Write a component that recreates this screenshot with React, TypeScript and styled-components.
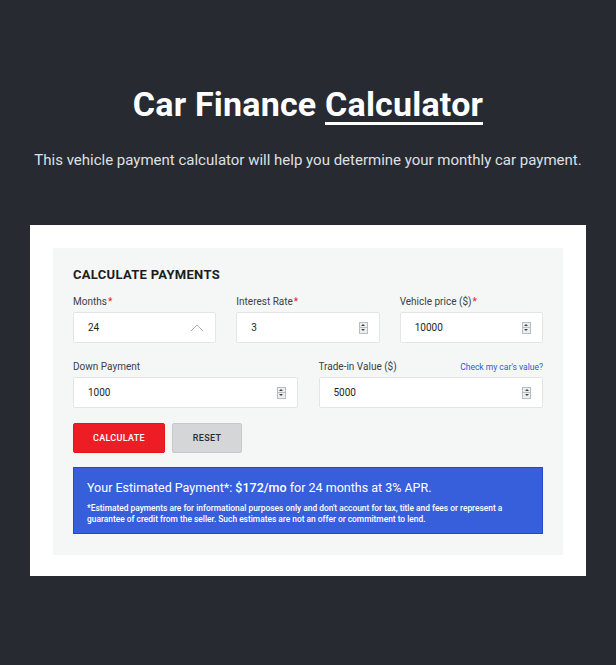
import styled, { createGlobalStyle } from "styled-components";

const GlobalStyle = createGlobalStyle`
  * { box-sizing: border-box; }
  body {
    margin: 0;
    background-color: #272a31;
    font-family: Roboto, "Noto Sans", Arial, sans-serif;
  }
`;

const Page = styled.div`
  min-height: 665px;
  padding: 84px 30px 89px;
  background-color: #272a31;
`;

const Title = styled.h1`
  margin: 0;
  text-align: center;
  color: #ffffff;
  font-family: Roboto, Arial, sans-serif;
  font-weight: 700;
  font-size: 34px;
  line-height: 40px;
  letter-spacing: 0.2px;
`;

const Underlined = styled.span`
  display: inline-block;
  border-bottom: 3px solid #ffffff;
  line-height: 36px;
`;

const Lead = styled.p`
  margin: 25px 0 0;
  text-align: center;
  color: #dfe0e2;
  font-size: 15px;
  line-height: 20px;
`;

const Card = styled.div`
  margin-top: 55px;
  background-color: #ffffff;
  padding: 23px 23px 21px;
`;

const Panel = styled.div`
  background-color: #f5f6f6;
  padding: 19px 20px 21px;
`;

const Heading = styled.h2`
  margin: 0 0 14px;
  color: #1b1d22;
  font-size: 13px;
  font-weight: 700;
  letter-spacing: 0.3px;
  text-transform: uppercase;
`;

const Row = styled.div<{ $cols: number; $gap: number }>`
  display: grid;
  grid-template-columns: repeat(${(p) => p.$cols}, 1fr);
  column-gap: ${(p) => p.$gap}px;
  margin-bottom: 18px;
`;

const Field = styled.div`
  display: flex;
  flex-direction: column;
`;

const LabelLine = styled.div`
  display: flex;
  justify-content: space-between;
  align-items: baseline;
  height: 16px;
`;

const Label = styled.label`
  color: #3c3f45;
  font-size: 10px;
`;

const Req = styled.span`
  color: #e3202a;
  margin-left: 1px;
`;

const Link = styled.a`
  color: #2f5ad9;
  font-size: 8.5px;
  text-decoration: none;
`;

const InputBox = styled.div`
  height: 31px;
  display: flex;
  align-items: center;
  justify-content: space-between;
  padding: 0 11px 0 14px;
  background-color: #ffffff;
  border: 1px solid #e3e5e7;
  border-radius: 2px;
  color: #1d1f24;
  font-size: 10px;
`;

const Spinner = styled.span`
  display: flex;
  flex-direction: column;
  width: 9px;
  height: 12px;
  border: 1px solid #b9bcc0;
  background-color: #eceef0;
`;

const SpinHalf = styled.span<{ $down?: boolean }>`
  flex: 1;
  display: flex;
  align-items: center;
  justify-content: center;
  border-top: ${(p) => (p.$down ? "1px solid #b9bcc0" : "none")};
  &::after {
    content: "";
    border-left: 2px solid transparent;
    border-right: 2px solid transparent;
    ${(p) =>
      p.$down
        ? "border-top: 2px solid #444;"
        : "border-bottom: 2px solid #444;"}
  }
`;

const Buttons = styled.div`
  display: flex;
  gap: 7px;
  margin-top: -3px;
`;

const Button = styled.button<{ $primary?: boolean }>`
  height: 30px;
  padding: 0 ${(p) => (p.$primary ? 19 : 20)}px;
  border: 1px solid ${(p) => (p.$primary ? "#e5141c" : "#c7c9cb")};
  border-radius: 2px;
  background-color: ${(p) => (p.$primary ? "#ee1c25" : "#d5d6d8")};
  color: ${(p) => (p.$primary ? "#ffffff" : "#2a2c31")};
  font-family: Roboto, Arial, sans-serif;
  font-size: 9px;
  font-weight: 500;
  letter-spacing: 0.3px;
  text-transform: uppercase;
`;

const Result = styled.div`
  margin-top: 14px;
  background-color: #375fdc;
  border: 1px solid #2249c9;
  padding: 12px 13px 8px;
  color: #ffffff;
`;

const ResultLine = styled.p`
  margin: 0;
  font-size: 12.5px;
  line-height: 16px;
`;

const Amount = styled.span`
  font-weight: 500;
`;

const Fine = styled.p`
  margin: 7px 0 0;
  font-size: 8.4px;
  font-weight: 500;
  line-height: 11px;
`;

const Stepper = () => (
  <Spinner>
    <SpinHalf />
    <SpinHalf $down />
  </Spinner>
);

const Chevron = () => (
  <svg width="14" height="9" viewBox="0 0 14 9">
    <path d="M1 8 L7 2 L13 8" fill="none" stroke="#a9adb3" strokeWidth="1" />
  </svg>
);

const App = () => {
  return (
    <>
      <GlobalStyle />
      <Page>
        <Title>
          Car Finance <Underlined>Calculator</Underlined>
        </Title>
        <Lead>
          This vehicle payment calculator will help you determine your monthly car payment.
        </Lead>
        <Card>
          <Panel>
            <Heading>Calculate Payments</Heading>
            <Row $cols={3} $gap={20}>
              <Field>
                <LabelLine>
                  <Label>
                    Months<Req>*</Req>
                  </Label>
                </LabelLine>
                <InputBox>
                  24
                  <Chevron />
                </InputBox>
              </Field>
              <Field>
                <LabelLine>
                  <Label>
                    Interest Rate<Req>*</Req>
                  </Label>
                </LabelLine>
                <InputBox>
                  3
                  <Stepper />
                </InputBox>
              </Field>
              <Field>
                <LabelLine>
                  <Label>
                    Vehicle price ($)<Req>*</Req>
                  </Label>
                </LabelLine>
                <InputBox>
                  10000
                  <Stepper />
                </InputBox>
              </Field>
            </Row>
            <Row $cols={2} $gap={21}>
              <Field>
                <LabelLine>
                  <Label>Down Payment</Label>
                </LabelLine>
                <InputBox>
                  1000
                  <Stepper />
                </InputBox>
              </Field>
              <Field>
                <LabelLine>
                  <Label>Trade-in Value ($)</Label>
                  <Link href="#">Check my car's value?</Link>
                </LabelLine>
                <InputBox>
                  5000
                  <Stepper />
                </InputBox>
              </Field>
            </Row>
            <Buttons>
              <Button $primary>Calculate</Button>
              <Button>Reset</Button>
            </Buttons>
            <Result>
              <ResultLine>
                Your Estimated Payment*: <Amount>$172/mo</Amount> for 24 months at 3% APR.
              </ResultLine>
              <Fine>
                *Estimated payments are for informational purposes only and don't account for tax, title and fees or represent a guarantee of credit from the seller. Such estimates are not an offer or commitment to lend.
              </Fine>
            </Result>
          </Panel>
        </Card>
      </Page>
    </>
  );
};

export default App;
